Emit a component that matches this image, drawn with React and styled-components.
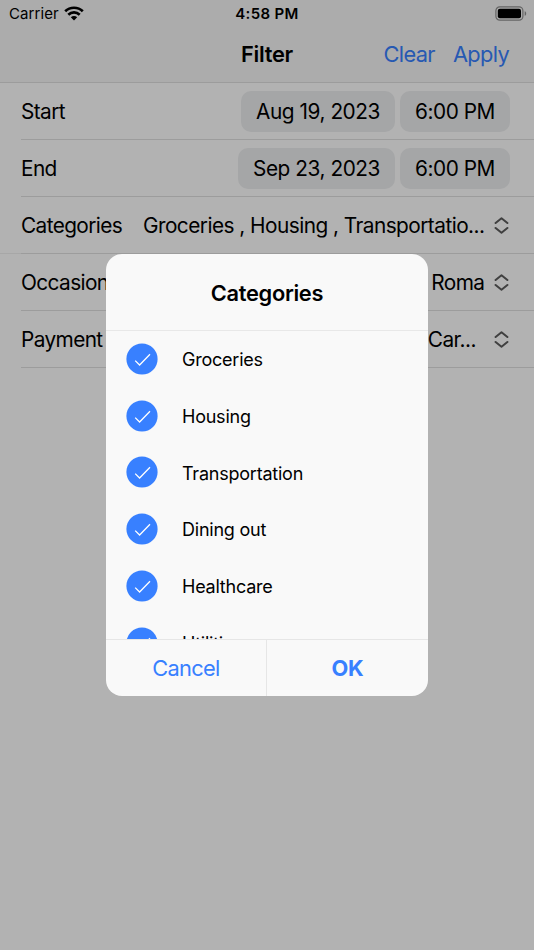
import React from 'react'
import styled, { createGlobalStyle } from 'styled-components'

const GlobalStyle = createGlobalStyle`
  * {
    box-sizing: border-box;
  }

  body {
    margin: 0;
    overflow: hidden;
    background: #fff;
    color: #000;
    font-family: Inter, "Liberation Sans", sans-serif;
  }
`

const Page = styled.div`
  height: 950px;
  overflow: hidden;
`

const Header = styled.div`
  height: 83px;
  background: #f7f7f7;
  border-bottom: 1px solid #e0e0e0;
`

const StatusBar = styled.div`
  display: grid;
  grid-template-columns: 1fr auto 1fr;
  align-items: center;
  height: 26px;
  padding: 0 7px 0 9px;
`

const Carrier = styled.div`
  display: flex;
  align-items: center;
  gap: 5px;
  font-size: 15px;
  letter-spacing: 0.1px;
`

const Clock = styled.div`
  margin-right: 2px;
  font-size: 15px;
  font-weight: 600;
  letter-spacing: 0.35px;
`

const BatterySlot = styled.div`
  display: flex;
  justify-content: flex-end;
`

const Toolbar = styled.div`
  display: grid;
  grid-template-columns: 1fr auto 1fr;
  align-items: center;
  height: 56px;
  padding-right: 25px;
  padding-left: 25px;
`

const Title = styled.div`
  grid-column: 2;
  font-size: 21.8px;
  font-weight: 600;
  letter-spacing: -0.3px;
`

const ToolbarButtons = styled.div`
  display: flex;
  justify-content: flex-end;
  gap: 18px;
  color: #3880ff;
  font-size: 21.8px;
  letter-spacing: -0.65px;
`

const Row = styled.div`
  display: flex;
  height: 57px;
  padding-left: 21px;
  background: linear-gradient(${p => p.$lastInList ? '#efefef' : '#fff'}, ${p => p.$lastInList ? '#efefef' : '#fff'}) bottom / 100% 1px no-repeat;
`

const RowInner = styled.div`
  flex: 1;
  display: flex;
  align-items: center;
  min-width: 0;
  border-bottom: 1px solid #e0e0e0;
  font-size: 20.8px;
  letter-spacing: -0.53px;
  white-space: nowrap;
`

const Label = styled.div`
  letter-spacing: -0.6px;
`

const Chips = styled.div`
  display: flex;
  gap: 5px;
  margin-left: auto;
  margin-right: 24px;
`

const Chip = styled.div`
  display: flex;
  align-items: center;
  justify-content: center;
  width: ${p => p.$width}px;
  height: 41px;
  border-radius: 10px;
  background: #edeef0;
  letter-spacing: -0.45px;
`

const Value = styled.div`
  margin-left: auto;
  margin-right: ${p => p.$gap || 9.5}px;
`

const SelectIcon = styled.svg`
  display: block;
  flex: none;
  margin-right: 25px;
  stroke: #5c5c5c;
`

const Backdrop = styled.div`
  position: absolute;
  inset: 0;
  display: flex;
  align-items: center;
  justify-content: center;
  background: rgba(0, 0, 0, 0.3);
`

const Alert = styled.div`
  display: flex;
  flex-direction: column;
  width: 322px;
  height: 442px;
  border-radius: 16px;
  overflow: hidden;
  background: #f9f9f9;
`

const AlertTitle = styled.div`
  height: 75.5px;
  padding-top: 25px;
  font-size: 21.8px;
  font-weight: 600;
  line-height: 28px;
  letter-spacing: -0.3px;
  text-align: center;
`

const Options = styled.div`
  flex: 1;
  min-height: 0;
  overflow: hidden;
  border-top: 1px solid #e8e8e8;
`

const Option = styled.div`
  display: flex;
  align-items: center;
  gap: 24px;
  height: 56.75px;
  padding-left: 20px;
  font-size: 18px;
  letter-spacing: -0.23px;
`

const OptionLabel = styled.div`
  padding-top: 1.5px;
`

const AlertButtons = styled.div`
  display: flex;
  height: 57px;
  border-top: 1px solid #e6e6e6;
`

const AlertButton = styled.div`
  width: ${p => p.$strong ? 162 : 160}px;
  display: flex;
  align-items: center;
  justify-content: center;
  padding-bottom: 1px;
  color: #3880ff;
  font-size: 21.8px;
  font-weight: ${p => p.$strong ? 700 : 400};
  letter-spacing: ${p => p.$strong ? -0.2 : -0.7}px;

  & + & {
    border-left: 1px solid #e6e6e6;
  }
`

const categories = ['Groceries', 'Housing', 'Transportation', 'Dining out', 'Healthcare', 'Utilities']

const Wifi = () => (
  <svg width="20" height="15" viewBox="0 0 20 15">
    <g fill="none" stroke="#000" strokeWidth="2.7">
      <path d="M1.2 5.2C6 .6 14 .6 18.8 5.2" />
      <path d="M4.3 8.7c3.2-3 8.2-3 11.4 0" />
    </g>
    <path d="M6.8 11.3c1.8-1.8 4.6-1.8 6.4 0L10 14.4z" />
  </svg>
)

const Battery = () => (
  <svg width="32" height="15" viewBox="0 0 32 15">
    <rect x=".9" y=".9" width="27" height="13.2" rx="3.8" fill="none" stroke="#909090" strokeWidth="1.2" />
    <rect x="2.8" y="2.8" width="23.2" height="9.4" rx="2" />
    <path d="M29.7 5.2c2 .7 2 3.9 0 4.6z" fill="#909090" />
  </svg>
)

const Expand = () => (
  <SelectIcon width="15" height="17" viewBox="0 0 15 17" fill="none" strokeWidth="2" strokeLinecap="round" strokeLinejoin="round">
    <path d="M1.6 6l5.9-4.8L13.4 6M1.6 11l5.9 4.8 5.9-4.8" />
  </SelectIcon>
)

const Check = () => (
  <svg width="32" height="32" viewBox="0 0 32 32">
    <circle cx="16" cy="16" r="15.6" fill="#3880ff" />
    <path d="M9.2 17.6l4.4 4.4L24 11.2" fill="none" stroke="#fff" strokeWidth="1.3" />
  </svg>
)

const DateRow = ({ label, date, time, width }) => (
  <Row>
    <RowInner>
      <Label>{label}</Label>
      <Chips>
        <Chip $width={width}>{date}</Chip>
        <Chip $width={110}>{time}</Chip>
      </Chips>
    </RowInner>
  </Row>
)

const SelectRow = ({ label, value, gap, lastInList }) => (
  <Row $lastInList={lastInList}>
    <RowInner>
      <Label>{label}</Label>
      <Value $gap={gap}>{value}</Value>
      <Expand />
    </RowInner>
  </Row>
)

export default () => {
  return (
    <>
      <GlobalStyle />
      <Page>
        <Header>
          <StatusBar>
            <Carrier>Carrier <Wifi /></Carrier>
            <Clock>4:58 PM</Clock>
            <BatterySlot><Battery /></BatterySlot>
          </StatusBar>
          <Toolbar>
            <Title>Filter</Title>
            <ToolbarButtons>
              <span>Clear</span>
              <span>Apply</span>
            </ToolbarButtons>
          </Toolbar>
        </Header>
        <DateRow label="Start" date="Aug 19, 2023" time="6:00 PM" width={154} />
        <DateRow label="End" date="Sep 23, 2023" time="6:00 PM" width={157} />
        <SelectRow label="Categories" value="Groceries , Housing , Transportatio..." lastInList />
        <SelectRow label="Occasion" value="Roma" />
        <SelectRow label="Payment" value="Car..." gap={18} />
      </Page>
      <Backdrop>
        <Alert>
          <AlertTitle>Categories</AlertTitle>
          <Options>
            {categories.map(name => (
              <Option key={name}>
                <Check />
                <OptionLabel>{name}</OptionLabel>
              </Option>
            ))}
          </Options>
          <AlertButtons>
            <AlertButton>Cancel</AlertButton>
            <AlertButton $strong>OK</AlertButton>
          </AlertButtons>
        </Alert>
      </Backdrop>
    </>
  )
}
